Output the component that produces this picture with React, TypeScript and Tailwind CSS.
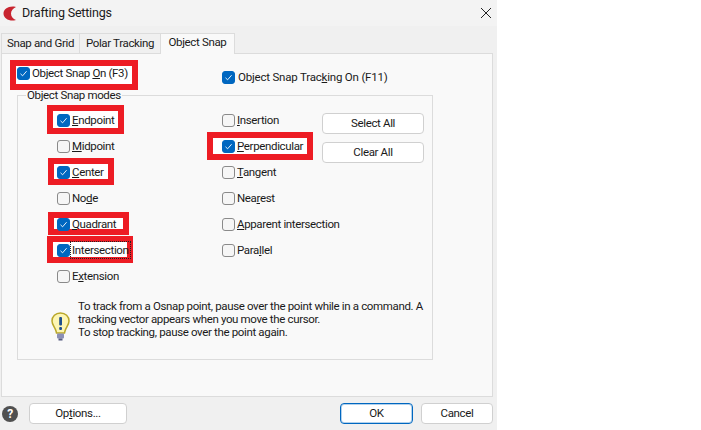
import type { ReactNode } from 'react'

const BLUE = 'bg-[#0067c0] border-[#0067c0]'

function Box({ on }: { on?: boolean }) {
  return (
    <span className={`relative z-10 w-[13px] h-[13px] shrink-0 rounded-[3px] border flex items-center justify-center ${on ? BLUE : 'bg-[#f6f6f6] border-[#8a8a8a]'}`}>
      {on && (
        <svg width="9" height="9" viewBox="0 0 9 9" fill="none">
          <path d="M1.5 4.8 L3.6 6.8 L7.6 2.2" stroke="#fff" strokeWidth="0.9" />
        </svg>
      )}
    </span>
  )
}

// red annotation frame, sits behind the row content
function Mark({ className }: { className: string }) {
  return <span className={`absolute border-[6px] border-[#ed1c24] bg-white ${className}`} />
}

function Row({ on, children, mark }: { on?: boolean; children: ReactNode; mark?: string }) {
  return (
    <div className="relative h-[26px] flex items-center gap-[2px] whitespace-nowrap">
      {mark && <Mark className={mark} />}
      <Box on={on} />
      <span className="relative z-10 pt-px">{children}</span>
    </div>
  )
}

function Btn({ children, className = '' }: { children: ReactNode; className?: string }) {
  return (
    <div className={`h-[21px] pt-px rounded-[4px] border border-[#d0d0d0] bg-white flex items-center justify-center ${className}`}>
      {children}
    </div>
  )
}

function Logo() {
  return (
    <svg width="14" height="15" viewBox="0 0 14 15">
      <path d="M13 1 L11 0.5 C5 0 0.5 3 0.5 7.5 C0.5 12 5 15 11 14.5 L13 14 C10 13 8 10.5 8 7.5 C8 4.5 10 2.5 13 1 Z" fill="#c8242f" />
    </svg>
  )
}

function Bulb() {
  return (
    <svg width="19" height="29" viewBox="0 0 19 29">
      <path d="M9.5 1 C4.5 1 1 4.5 1 9 C1 13 4 15 5 19 L5.5 21 L13.5 21 L14 19 C15 15 18 13 18 9 C18 4.5 14.5 1 9.5 1 Z" fill="#fdf6b4" stroke="#b9a72a" strokeWidth="1.5" />
      <rect x="8.2" y="5" width="2.8" height="8.5" rx="1" fill="#1f4f8f" />
      <rect x="8.2" y="15" width="2.8" height="3" rx="1" fill="#1f4f8f" />
      <rect x="6" y="21.5" width="7" height="5" rx="1" fill="#8b8fb5" />
      <rect x="7.5" y="26.5" width="4" height="2" fill="#555a80" />
    </svg>
  )
}

export default function App() {
  return (
    <div className="w-[701px] h-[430px] bg-white overflow-hidden text-[11.5px] tracking-[-0.35px] leading-none text-[#1a1a1a] font-['Roboto',sans-serif]">
      <div className="w-[497px] h-[430px] bg-[#f0f0f0] flex flex-col">
        {/* title bar */}
        <div className="h-[26px] bg-[#f3f3f3] shrink-0 flex items-center pl-[3px] pr-[5px]">
          <Logo />
          <span className="ml-[5px] text-[12.5px] tracking-[-0.2px]">Drafting Settings</span>
          <svg className="ml-auto" width="12" height="12" viewBox="0 0 12 12" stroke="#222" strokeWidth="1" fill="none">
            <path d="M1 1 L11 11 M11 1 L1 11" />
          </svg>
        </div>

        {/* tabs */}
        <div className="h-[27px] shrink-0 flex items-end pl-[1px] relative whitespace-nowrap">
          <div className="h-[20px] w-[79px] border border-b-0 border-[#dcdcdc] bg-[#f0f0f0] flex items-center justify-center pt-px">Snap and Grid</div>
          <div className="h-[20px] w-[81px] border border-l-0 border-b-0 border-[#dcdcdc] bg-[#f0f0f0] flex items-center justify-center pt-px">Polar Tracking</div>
          <div className="h-[21px] w-[74px] border border-l-0 border-b-0 border-[#dcdcdc] bg-[#f9f9f9] flex items-center justify-center -mb-px relative z-10 pb-[3px]">Object Snap</div>
        </div>

        {/* tab page */}
        <div className="ml-px w-[492px] h-[344px] shrink-0 border border-[#dcdcdc] bg-[#f9f9f9] pl-[15px] isolate">
          <div className="h-[41px] flex">
            <div className="w-[205px] pt-[6px]">
              <Row on mark="left-[-7px] w-[128px] top-0 h-[30px]">
                Object Snap <u>O</u>n (F3)
              </Row>
            </div>
            <div className="pt-[10px]">
              <Row on><span className="tracking-[-0.2px] ml-px">Object Snap Trac<u>k</u>ing On (F11)</span></Row>
            </div>
          </div>

          {/* group box */}
          <div className="relative w-[416px] h-[265px] border border-[#dcdcdc] pt-[11px]">
            <span className="absolute left-[8px] -top-[6px] bg-[#f9f9f9] px-px">Object Snap modes</span>
            <div className="flex">
              <div className="w-[204px] shrink-0 pl-[39px]">
                <Row on mark="left-[-10px] w-[77px] top-[-2px] h-[29px]"><u>E</u>ndpoint</Row>
                <Row><u>M</u>idpoint</Row>
                <Row on mark="left-[-9px] w-[66px] top-[-1px] h-[27px]"><u>C</u>enter</Row>
                <Row>No<u>d</u>e</Row>
                <Row on mark="left-[-9px] w-[81px] top-[1px] h-[23px]"><u>Q</u>uadrant</Row>
                <Row on mark="left-[-10px] w-[86px] top-[-1px] h-[27px]">
                  <span className="outline-1 outline-dotted outline-[#222] outline-offset-1">Intersection</span>
                </Row>
                <Row>E<u>x</u>tension</Row>
              </div>
              <div className="w-[100px] shrink-0">
                <Row><u>I</u>nsertion</Row>
                <Row on mark="left-[-15px] w-[106px] top-[-1px] h-[28px]"><u>P</u>erpendicular</Row>
                <Row><u>T</u>angent</Row>
                <Row>Nea<u>r</u>est</Row>
                <Row><u>A</u>pparent intersection</Row>
                <Row>Para<u>l</u>lel</Row>
              </div>
              <div className="w-[102px] shrink-0 flex flex-col gap-[8px] pt-[6px]">
                <Btn>Select All</Btn>
                <Btn>Clear All</Btn>
              </div>
            </div>

            <div className="flex items-start mt-[11px] pl-[33px]">
              <div className="w-[27px] pt-[12px] shrink-0"><Bulb /></div>
              <p className="leading-[13px] whitespace-nowrap">
                To track from a Osnap point, pause over the point while in a command. A<br />
                tracking vector appears when you move the cursor.<br />
                To stop tracking, pause over the point again.
              </p>
            </div>
          </div>
        </div>

        {/* footer */}
        <div className="flex-1 flex items-center pl-[2px] pr-[4px]">
          <span className="w-[16px] h-[16px] rounded-full bg-[#505050] text-white font-bold text-[12px] flex items-center justify-center">?</span>
          <Btn className="w-[98px] ml-[11px]">Op<u>t</u>ions...</Btn>
          <Btn className="w-[73px] ml-auto !border-[#0067c0] shadow-[inset_0_0_0_1px_#0067c04d]">OK</Btn>
          <Btn className="w-[72px] ml-[8px]">Cancel</Btn>
        </div>
      </div>
    </div>
  )
}
